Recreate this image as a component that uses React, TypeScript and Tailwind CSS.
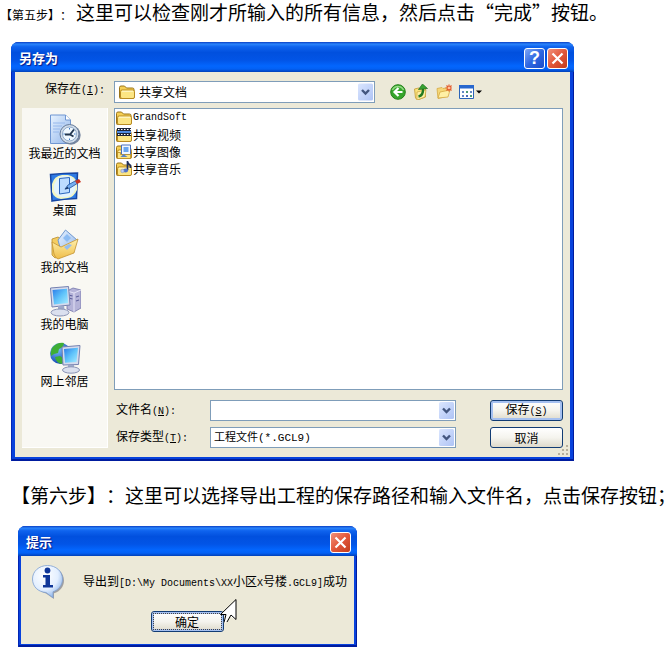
import React, { useState } from "react";

type Children = { children: React.ReactNode };

/* Half-width Latin run set between 12px Chinese characters */
function Latin({ children }: Children) {
  return <span className="font-['Liberation_Mono',monospace] text-[10px] whitespace-pre">{children}</span>;
}

function Chevron() {
  return (
    <svg viewBox="0 0 15 17" className="h-full w-[15px]" aria-hidden="true">
      <defs>
        <linearGradient id="arrowFace" x1="0" y1="0" x2="1" y2="1">
          <stop offset="0" stopColor="#dbe6fe" />
          <stop offset="1" stopColor="#aec3f5" />
        </linearGradient>
      </defs>
      <rect width="15" height="17" rx="1.5" fill="url(#arrowFace)" />
      <path d="M4 6.5l3.5 3.5L11 6.5" fill="none" stroke="#43567f" strokeWidth="2.4" />
    </svg>
  );
}

function FolderShape() {
  return (
    <>
      <path d="M.5 3.500q0-1.500 1.500-1.500h3.500l2 2h6q1.500 0 1.500 1.500v8q0 1-1 1H1.500q-1 0-1-1z" fill="#f5cf55" stroke="#9a7418" />
      <path d="M1.500 7.500q0-1.500 1.500-1.500h11q1.500 0 1.500 1.500v5.500q0 1.500-1.500 1.500H3q-1.500 0-1.500-1.500z" fill="#fce583" stroke="#b98b22" />
      <path d="M3 7.200h11" stroke="#fffbd8" />
    </>
  );
}

function SmallIcon({ kind }: { kind: string }) {
  return (
    <svg viewBox="0 0 16 16" className="size-4 shrink-0" aria-hidden="true">
      <FolderShape />
      {kind === "video" && (
        <>
          <rect x="1" y="1" width="14" height="8" fill="#1c2438" />
          <path d="M2 2.500h13M2 7.500h13" stroke="#fff" strokeDasharray="1.500 1.500" />
          <path d="M1 4h14v2H1z" fill="#4f8ae0" />
        </>
      )}
      {kind === "image" && (
        <>
          <path d="M5.500 1h9v9.500h-9z" fill="#f1f7ff" stroke="#4a70be" />
          <path d="M7.500 3h5v5h-5z" fill="#6ba6f0" />
          <path d="M1.500 8.500h3v2h10v4h-13z" fill="#fce583" stroke="#b98b22" strokeWidth=".8" />
          <path d="M4.500 13l3-3 4 3z" fill="#5c84c6" />
        </>
      )}
      {kind === "music" && (
        <>
          <path d="M11.500 0v9M11.500 1q.5 2 3 3.500v2.500" fill="none" stroke="#1f2f58" strokeWidth="1.700" />
          <ellipse cx="9.500" cy="9.500" rx="2.600" ry="2" fill="#5273c9" />
          <circle cx="6.500" cy="10" r="1.700" fill="#bccdf3" stroke="#7c91c6" strokeWidth=".6" />
        </>
      )}
    </svg>
  );
}

function Gradients() {
  return (
    <defs>
      <linearGradient id="screen" x1="0" y1="0" x2="1" y2="1">
        <stop offset="0" stopColor="#2b7be8" />
        <stop offset=".5" stopColor="#5fc3fa" />
        <stop offset="1" stopColor="#a9ecff" />
      </linearGradient>
      <linearGradient id="page" x1="0" y1="0" x2="1" y2="1">
        <stop offset="0" stopColor="#e8f3ff" />
        <stop offset="1" stopColor="#8fb4ea" />
      </linearGradient>
      <linearGradient id="gold" x1="0" y1="0" x2="0" y2="1">
        <stop offset="0" stopColor="#fff1ac" />
        <stop offset="1" stopColor="#efbd48" />
      </linearGradient>
      <radialGradient id="globe" cx=".35" cy=".3" r=".75">
        <stop offset="0" stopColor="#7fc3ff" />
        <stop offset="1" stopColor="#0b3fae" />
      </radialGradient>
    </defs>
  );
}

function PlaceIcon({ kind }: { kind: string }) {
  return (
    <svg viewBox="0 0 32 32" className="size-8" aria-hidden="true">
      <Gradients />
      {kind === "recent" && (
        <>
          <path d="M1.500 1h15l5 5v23.500h-20z" fill="url(#page)" stroke="#6f96d2" />
          <path d="M16.500 1v5h5" fill="#fff" stroke="#6f96d2" />
          <path d="M4 9h12M4 12h9M4 15h7M4 18h6" stroke="#96b8ec" />
          <circle cx="22" cy="21" r="9.700" fill="#77879f" />
          <circle cx="20.500" cy="20" r="9.500" fill="#cfdbe9" stroke="#647a9a" />
          <circle cx="20.500" cy="20" r="7" fill="#eff8ff" stroke="#8fa9c8" />
          <path d="M16 20.500h5l4-5M21 20.500l3.500 2" fill="none" stroke="#22364f" strokeWidth="1.900" />
          <path d="M20.500 14v1.500M20.500 24.500V26M14.500 20H16M25 20h1.500" stroke="#3a78c4" />
        </>
      )}
      {kind === "desktop" && (
        <>
          <path d="M1.500 3.500Q15 2 28.500 2l-1 25.500Q15 28 3 30z" fill="#2f7be4" stroke="#1747a4" strokeWidth="1.500" />
          <path d="M3 13q2-8 10-9h6q7 1 9 8v7q-3 7-9 8l-7 1q-7-1-9-7z" fill="#f2f6c4" />
          <path d="M5 14q3-8 9-9h5q6 2 8 8l-1 6q-3 6-8 7h-6q-5-2-7-6z" fill="#e2f3ff" />
          <path d="M10.500 7.500l10-1v15l-10 1.500z" fill="#bcdcff" stroke="#2c66bc" />
          <path d="M16 18l3-4 8-4.500 2 2.500-8 5z" fill="#74aef0" stroke="#22529b" strokeWidth=".8" />
          <path d="M26 10l4-2 2 3-4 2z" fill="#c9331f" />
          <path d="M15.500 18.500l3-3 1 2z" fill="#173766" />
        </>
      )}
      {kind === "documents" && (
        <>
          <path d="M3 11l6-2 3 2 3 15-9 4-3-3z" fill="#f4cd62" stroke="#b98c2a" strokeWidth=".8" />
          <path d="M9 12L16.500 2 28 12l-3 10-12 5z" fill="url(#page)" stroke="#6f98cf" />
          <path d="M14 10l4-4 4 4-4 4z" fill="#8cbcf3" />
          <path d="M3 14l9 5 17-8-4 14L9 31q-3-1-4-5z" fill="url(#gold)" stroke="#c49332" strokeWidth=".8" />
          <path d="M15 19l5-3 3 1-5 5z" fill="#95bdf0" />
        </>
      )}
      {kind === "computer" && (
        <>
          <path d="M18 6l6-3 8 2v18l-7 4-7-3z" fill="#b5b3d8" stroke="#7475aa" strokeWidth=".8" />
          <path d="M18 6l7 2 7-3M25 8v19" fill="none" stroke="#e3e2f6" />
          <path d="M19.500 10l4 1M19.500 13l4 1M27 12l3-1M27 16l3-1" stroke="#5f619d" strokeWidth="1.200" />
          <path d="M1.500 3l18-1.500L21 20 3 22z" fill="#d5dbed" stroke="#7581b0" />
          <path d="M3.500 5l14.500-1.300L19 18 5 19.500z" fill="url(#screen)" />
          <path d="M9 21h6l1 5H9z" fill="#9ca8ca" />
          <ellipse cx="11" cy="27.500" rx="9" ry="3.500" fill="#dbe0ef" stroke="#8b94b6" />
        </>
      )}
      {kind === "network" && (
        <>
          <circle cx="11.500" cy="11.500" r="10.500" fill="url(#globe)" />
          <path d="M3 6q5-6 12-5l-1 4-4 2-1 4-4 1-3 2q-1-4 1-8zM6 15l5-1 4 3-2 5q-6-1-7-7z" fill="#3fae36" />
          <path d="M13 5l18-1.500-1.500 19L14 23z" fill="#d5dbed" stroke="#7581b0" />
          <path d="M15 7l14-1.300L27.500 20 16 20.800z" fill="url(#screen)" />
          <path d="M19 23h6v4h-6z" fill="#9ca8ca" />
          <ellipse cx="22" cy="28" rx="8.500" ry="3.200" fill="#dbe0ef" stroke="#8b94b6" />
        </>
      )}
    </svg>
  );
}

const tools = [
  {
    label: "后退",
    art: (
      <svg viewBox="0 0 16 16" className="size-4" aria-hidden="true">
        <circle cx="8" cy="8" r="7.300" fill="#36a52c" stroke="#238019" />
        <path d="M2.500 6a6 6 0 0 1 11 0" fill="none" stroke="#92da83" strokeWidth="1.500" />
        <path d="M12.500 8H5M8.500 4L4.500 8l4 4" fill="none" stroke="#fff" strokeWidth="2.200" />
      </svg>
    ),
  },
  {
    label: "向上一级",
    art: (
      <svg viewBox="0 0 16 16" className="size-4" aria-hidden="true">
        <path d="M1.500 5l4-1 2 1 5-1v9l-8 3-2-2z" fill="#fae27d" stroke="#c39a33" strokeWidth=".8" />
        <path d="M4 8l9-2-1 7-8 3z" fill="#fff0a5" stroke="#c39a33" strokeWidth=".6" />
        <path d="M5.500 12.500q5-1 4.500-8" fill="none" stroke="#237a21" strokeWidth="2.400" />
        <path d="M5.500 5.500l4-5.500L14.500 4.500z" fill="#37a331" stroke="#1b6b1b" strokeWidth=".7" />
      </svg>
    ),
  },
  {
    label: "新建文件夹",
    art: (
      <svg viewBox="0 0 16 16" className="size-4" aria-hidden="true">
        <path d="M1 4.500l5-1 1 1 5-1 1 3-2 6-9 2z" fill="#f5d777" stroke="#d5a944" strokeWidth=".8" />
        <path d="M2 14l2-6 10-2-2 7z" fill="#fff0a5" stroke="#d5a944" strokeWidth=".8" />
        <path d="M13 .5v7M9.500 4h6.500M10.500 1.500l5 5M15.500 1.500l-5 5" stroke="#e2592b" strokeWidth="1.200" />
        <circle cx="13" cy="4" r="1.300" fill="#ffc09a" />
      </svg>
    ),
  },
  {
    label: "查看菜单",
    art: (
      <svg viewBox="0 0 23 16" className="h-4 w-[23px]" aria-hidden="true">
        <path d="M.5 1.500h14v13H.5z" fill="#fff" stroke="#2b63b8" />
        <path d="M0 1h15v3.500H0z" fill="#2767ce" />
        <path d="M3 7h2v2H3zM3 11h2v2H3zM11 7h2v2h-2z" fill="#6588c4" />
        <path d="M7 7h2v2H7zM11 11h2v2h-2z" fill="#4d9b75" />
        <path d="M7 11h2v2H7z" fill="#506bb5" />
        <path d="M17 6.500h6L20 9.500z" fill="#000" />
      </svg>
    ),
  },
];

const titleButton =
  "flex size-[21px] items-center justify-center rounded-[3px] border border-white bg-linear-to-br";

function CloseButton() {
  return (
    <button aria-label="关闭" className={titleButton + " from-[#f0907a] via-[#e2573a] to-[#c33c1b]"}>
      <svg viewBox="0 0 19 19" className="size-full" aria-hidden="true">
        <path d="M4.500 4.500l10 10M14.500 4.500l-10 10" stroke="#fff" strokeWidth="2.200" />
      </svg>
    </button>
  );
}

function TitleBar({ title, help }: { title: string; help?: boolean }) {
  return (
    <header className="flex h-[30px] items-center gap-[2px] rounded-t-[7px] bg-[linear-gradient(180deg,#0a3fc4_0%,#2a84fb_7%,#0f63ee_16%,#0150de_35%,#0254e6_60%,#0366fe_80%,#0361f5_90%,#0140b8_100%)] pt-[2px] pr-[6px] pl-2">
      <h2 className="flex-1 text-[13px] font-bold text-white [text-shadow:1px_1px_1px_#0a1883]">{title}</h2>
      {help && (
        <button
          aria-label="帮助"
          className={titleButton + " from-[#7fa6f5] via-[#2f67e2] to-[#1b4bc8] font-['Liberation_Sans',sans-serif] text-lg leading-none font-bold text-white"}
        >
          ?
        </button>
      )}
      <CloseButton />
    </header>
  );
}

const frame =
  "rounded-t-[8px] bg-[#0842dc] shadow-[inset_1px_0_#0226b4,inset_-1px_-2px_#001c9e]";

const places = [
  { kind: "recent", name: "我最近的文档" },
  { kind: "desktop", name: "桌面" },
  { kind: "documents", name: "我的文档" },
  { kind: "computer", name: "我的电脑" },
  { kind: "network", name: "网上邻居" },
];

const files = [
  { kind: "folder", name: <Latin>GrandSoft</Latin> },
  { kind: "video", name: "共享视频" },
  { kind: "image", name: "共享图像" },
  { kind: "music", name: "共享音乐" },
];

const pushButton =
  "h-[21px] w-[73px] rounded-[3px] border border-[#123c74] bg-linear-to-b from-white via-[#f5f4ee] to-[#dedacb]";
const defaultRing = " shadow-[inset_0_0_0_2px_#a5c0f0]";
const field = "border border-[#7f9db9] bg-white";

function SaveDialog() {
  const [fileName, setFileName] = useState("");
  return (
    <section className={frame + " max-w-[563px] px-1 pb-1"}>
      <div className="-mx-1">
        <TitleBar title="另存为" help />
      </div>
      <div className="relative bg-[#ece9d8] px-[7px] pt-2 pb-[9px]">
        <div className="flex items-center">
          <label htmlFor="folder" className="w-[92px] shrink-0 pr-[9px] pb-1 text-right">
            保存在<Latin>(<u>I</u>):</Latin>
          </label>
          <div className="relative w-[261px]">
            <select id="folder" className={field + " block h-[22px] w-full appearance-none pl-6 text-xs"}>
              <option>共享文档</option>
            </select>
            <span className="pointer-events-none absolute top-[3px] left-[5px]">
              <SmallIcon kind="folder" />
            </span>
            <span className="pointer-events-none absolute inset-y-[2px] right-[2px]">
              <Chevron />
            </span>
          </div>
          <div className="flex gap-[7px] pl-[15px]">
            {tools.map((tool) => (
              <button key={tool.label} aria-label={tool.label}>
                {tool.art}
              </button>
            ))}
          </div>
        </div>

        <div className="mt-[5px] flex gap-[6px]">
          <nav className="flex w-[86px] shrink-0 flex-col gap-[11px] border-r border-b border-[#fff] bg-[#f9f8f3] pt-[6px]">
            {places.map((place) => (
              <button key={place.kind} className="flex flex-col items-center leading-[14px] whitespace-nowrap">
                <PlaceIcon kind={place.kind} />
                {place.name}
              </button>
            ))}
          </nav>

          <div className="flex-1">
            <ul className={field + " h-[282px] pl-px"}>
              {files.map((file) => (
                <li key={file.kind} className="flex h-[17px] items-center gap-px">
                  <SmallIcon kind={file.kind} />
                  {file.name}
                </li>
              ))}
            </ul>
            <div className="mt-[10px] flex items-center">
              <label htmlFor="file-name" className="w-24 pl-[2px]">
                文件名<Latin>(<u>N</u>):</Latin>
              </label>
              <div className={field + " flex h-[21px] w-[246px] p-px"}>
                <input
                  id="file-name"
                  value={fileName}
                  onChange={(event) => setFileName(event.target.value)}
                  className="min-w-0 flex-1 px-[2px] outline-none"
                />
                <button aria-label="显示以前的文件名">
                  <Chevron />
                </button>
              </div>
              <button className={pushButton + defaultRing + " ml-auto"}>
                保存<Latin>(<u>S</u>)</Latin>
              </button>
            </div>
            <div className="mt-[6px] flex items-center">
              <label htmlFor="file-type" className="w-24 pl-[2px]">
                保存类型<Latin>(<u>T</u>):</Latin>
              </label>
              <div className="relative w-[246px]">
                <select
                  id="file-type"
                  className={field + " block h-[21px] w-full appearance-none pl-[3px] font-['Liberation_Mono','Noto_Sans_CJK_SC',monospace] text-[11px]"}
                >
                  <option>工程文件(*.GCL9)</option>
                </select>
                <span className="pointer-events-none absolute inset-y-[2px] right-[2px]">
                  <Chevron />
                </span>
              </div>
              <button className={pushButton + " ml-auto"}>取消</button>
            </div>
          </div>
        </div>

        <svg viewBox="0 0 12 12" className="absolute right-px bottom-px size-3" aria-hidden="true">
          <path d="M9 1h2v2H9zM5 5h2v2H5zM9 5h2v2H9zM1 9h2v2H1zM5 9h2v2H5zM9 9h2v2H9z" fill="#b8b09c" />
        </svg>
      </div>
    </section>
  );
}

function MessageDialog() {
  return (
    <section className={frame + " max-w-[339px] px-[3px] pb-[3px]"}>
      <div className="-mx-[3px]">
        <TitleBar title="提示" />
      </div>
      <div className="bg-[#ece9d8] px-[11px] pt-[9px] pb-3">
        <div className="flex items-center gap-[19px]">
          <svg viewBox="0 0 32 34" className="h-[34px] w-8 shrink-0" aria-hidden="true">
            <defs>
              <radialGradient id="bubble" cx=".4" cy=".3" r=".75">
                <stop offset="0" stopColor="#fff" />
                <stop offset=".6" stopColor="#e3efff" />
                <stop offset="1" stopColor="#86aee6" />
              </radialGradient>
            </defs>
            <path d="M17 2c8.500 0 15 5.800 15 13.500 0 6-4 11-10 12.800L22 34l-8-5.500C8 27 3 22 3 15.500 3 7.800 8.500 2 17 2z" fill="#85868f" opacity=".75" />
            <path d="M15.500.5c8.500 0 15 5.800 15 13.500 0 6-4 11-9.500 12.800v6L14 27.500C6 27 .5 21.500.5 14 .5 6.300 7 .5 15.500.5z" fill="url(#bubble)" stroke="#7d9fd2" strokeWidth=".8" />
            <circle cx="15.500" cy="5.500" r="2.900" fill="#0f3698" />
            <path d="M11 10h7v10h3v2.500H11V20h2.500v-7.500H11z" fill="#0f3698" />
          </svg>
          <p className="whitespace-nowrap">
            导出到<Latin>[D:\My Documents\XX</Latin>小区<Latin>X</Latin>号楼<Latin>.GCL9]</Latin>成功
          </p>
        </div>
        <div className="mt-3 flex justify-center pr-px">
          <div className="relative">
            <button className={pushButton + defaultRing + " block"}>
              <span className="mx-px block h-[17px] border border-dotted border-[#444] leading-[15px]">确定</span>
            </button>
            <svg viewBox="0 0 18 25" className="absolute -top-3 left-[69px] h-[25px] w-[18px]" aria-hidden="true">
              <path d="M16 .5L.5 15.500h5l-2 8 2 .5 4-7 6.500 4z" fill="#fff" />
              <path d="M16 .5L.5 15.500H6l-2 8M16 .5v20l-5-4.500-4 7" fill="none" stroke="#000" />
            </svg>
          </div>
        </div>
      </div>
    </section>
  );
}

export default function App() {
  return (
    <main
      lang="zh-CN"
      className="overflow-x-clip bg-white pb-[7px] font-['Noto_Sans_CJK_SC',sans-serif] text-xs leading-4 text-black [text-spacing-trim:space-all]"
    >
      <p className="text-[19px] leading-6 whitespace-nowrap">
        <span className="mr-1 text-xs">【第五步】：</span>
        这里可以检查刚才所输入的所有信息，然后点击“完成”按钮。
      </p>
      <div className="mt-[18px] ml-[11px]">
        <SaveDialog />
      </div>
      <p className="mt-[22px] mb-[19px] ml-[11px] text-[19px] leading-6 whitespace-nowrap">
        【第六步】：这里可以选择导出工程的保存路径和输入文件名，点击保存按钮；
      </p>
      <div className="ml-[18px]">
        <MessageDialog />
      </div>
    </main>
  );
}
